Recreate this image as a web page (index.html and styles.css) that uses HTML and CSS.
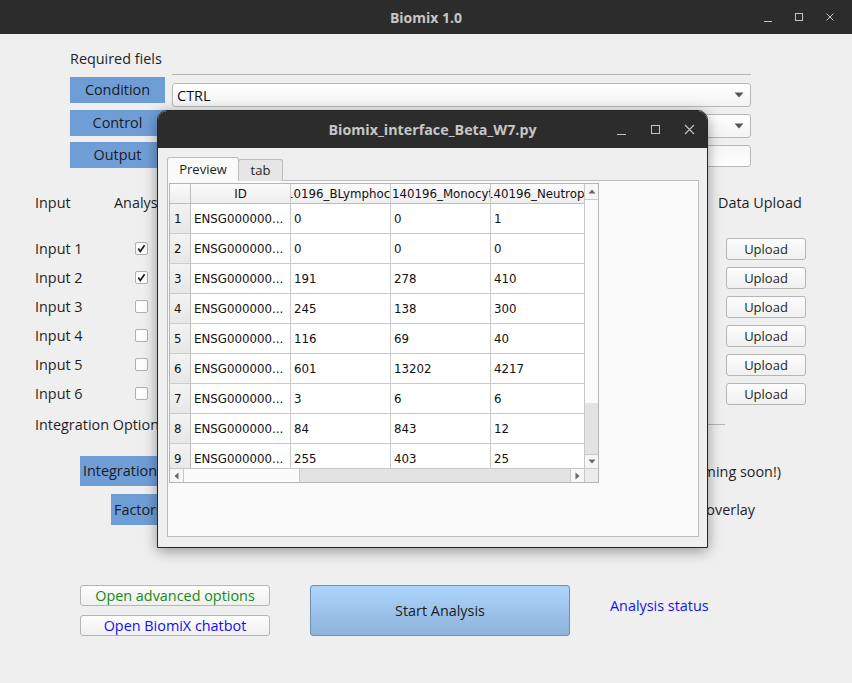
FILE: index.html
```html
<!DOCTYPE html>
<html lang="en">
<head>
<meta charset="utf-8">
<title>Biomix 1.0</title>
<link rel="stylesheet" href="styles.css">
</head>
<body>
<div class="app">
  <header class="titlebar">
    <span class="title">Biomix 1.0</span>
    <div class="wctl">
      <svg width="10" height="10" viewBox="0 0 10 10"><path d="M1 9.5H9" stroke="#c4c4c4" stroke-width="1"/></svg>
      <svg width="10" height="10" viewBox="0 0 10 10"><rect x="1.5" y="1.5" width="7" height="7" fill="none" stroke="#c4c4c4" stroke-width="1"/></svg>
      <svg width="10" height="10" viewBox="0 0 10 10"><path d="M1.5 1.5L8.5 8.5M8.5 1.5L1.5 8.5" stroke="#c4c4c4" stroke-width="1"/></svg>
    </div>
  </header>

  <main class="content">
    <section class="req">
      <div class="req-title">Required fiels</div>
      <div class="rule"></div>
      <div class="tag">Condition</div>
      <div class="combo c1"><span>CTRL</span><svg width="10" height="6" viewBox="0 0 10 6"><path d="M0.5 0.5H9.5L5 5.5Z" fill="#555"/></svg></div>
      <div class="tag">Control</div>
      <div class="combo c2"><span>Control</span><svg width="10" height="6" viewBox="0 0 10 6"><path d="M0.5 0.5H9.5L5 5.5Z" fill="#555"/></svg></div>
      <div class="tag">Output</div>
      <div class="lineedit"></div>
    </section>

    <section class="inputs">
      <div class="ih ih-input">Input</div>
      <div class="ih ih-analysis">Analysis</div>
      <div class="ih ih-upload">Data Upload</div>

      <div class="in-label">Input 1</div>
      <div class="chk"><svg width="11" height="11" viewBox="0 0 11 11"><path d="M2.3 5.6L4.3 8.4L8.6 2.2" fill="none" stroke="#1e1e1e" stroke-width="1.7"/></svg></div>
      <button class="upload">Upload</button>

      <div class="in-label">Input 2</div>
      <div class="chk"><svg width="11" height="11" viewBox="0 0 11 11"><path d="M2.3 5.6L4.3 8.4L8.6 2.2" fill="none" stroke="#1e1e1e" stroke-width="1.7"/></svg></div>
      <button class="upload">Upload</button>

      <div class="in-label">Input 3</div>
      <div class="chk"></div>
      <button class="upload">Upload</button>

      <div class="in-label">Input 4</div>
      <div class="chk"></div>
      <button class="upload">Upload</button>

      <div class="in-label">Input 5</div>
      <div class="chk"></div>
      <button class="upload">Upload</button>

      <div class="in-label">Input 6</div>
      <div class="chk"></div>
      <button class="upload">Upload</button>
    </section>

    <section class="integ-head">
      <span>Integration Options</span>
      <div class="integ-rule"></div>
    </section>

    <section class="opt-row integ-row">
      <div class="tag wide">Integration</div>
      <span class="opt-note">Multi-omics (Coming soon!)</span>
    </section>

    <section class="opt-row factors-row">
      <div class="tag wide">Factors</div>
      <span class="opt-note">Clinical overlay</span>
    </section>

    <section class="actions">
      <div class="side-btns">
        <button class="btn green">Open advanced options</button>
        <button class="btn blue">Open BiomiX chatbot</button>
      </div>
      <button class="start">Start Analysis</button>
      <span class="status">Analysis status</span>
    </section>
  </main>

  <div class="dialog">
    <header class="dtitle">
      <span class="title">Biomix_interface_Beta_W7.py</span>
      <div class="dctl">
        <svg width="11" height="11" viewBox="0 0 11 11"><path d="M1 10.5H10" stroke="#c4c4c4" stroke-width="1"/></svg>
        <svg width="11" height="11" viewBox="0 0 11 11"><rect x="1.5" y="1.5" width="8" height="8" fill="none" stroke="#c4c4c4" stroke-width="1"/></svg>
        <svg width="11" height="11" viewBox="0 0 11 11"><path d="M1 1L10 10M10 1L1 10" stroke="#c4c4c4" stroke-width="1.1"/></svg>
      </div>
    </header>
    <div class="dbody">
      <div class="tabs">
        <div class="tab active">Preview</div>
        <div class="tab">tab</div>
      </div>
      <div class="pane">
        <div class="table">
          <div class="viewport">
            <div class="grid">
              <div class="c hd rn"></div>
              <div class="c hd">ID</div>
              <div class="c hd hl"><span class="clip2">10196_BLymphocytes</span></div>
              <div class="c hd hl"><span class="clip3">140196_Monocytes</span></div>
              <div class="c hd hl"><span class="clip4">140196_Neutrophils</span></div>

              <div class="c rn">1</div><div class="c">ENSG000000...</div><div class="c">0</div><div class="c">0</div><div class="c">1</div>
              <div class="c rn">2</div><div class="c">ENSG000000...</div><div class="c">0</div><div class="c">0</div><div class="c">0</div>
              <div class="c rn">3</div><div class="c">ENSG000000...</div><div class="c">191</div><div class="c">278</div><div class="c">410</div>
              <div class="c rn">4</div><div class="c">ENSG000000...</div><div class="c">245</div><div class="c">138</div><div class="c">300</div>
              <div class="c rn">5</div><div class="c">ENSG000000...</div><div class="c">116</div><div class="c">69</div><div class="c">40</div>
              <div class="c rn">6</div><div class="c">ENSG000000...</div><div class="c">601</div><div class="c">13202</div><div class="c">4217</div>
              <div class="c rn">7</div><div class="c">ENSG000000...</div><div class="c">3</div><div class="c">6</div><div class="c">6</div>
              <div class="c rn">8</div><div class="c">ENSG000000...</div><div class="c">84</div><div class="c">843</div><div class="c">12</div>
              <div class="c rn">9</div><div class="c">ENSG000000...</div><div class="c">255</div><div class="c">403</div><div class="c">25</div>
            </div>
          </div>
          <div class="vscroll">
            <div class="sb-btn"><svg width="8" height="5" viewBox="0 0 8 5"><path d="M0.5 4.5H7.5L4 0.5Z" fill="#666"/></svg></div>
            <div class="sb-handle-v"></div>
            <div class="sb-track"></div>
            <div class="sb-btn bottom"><svg width="8" height="5" viewBox="0 0 8 5"><path d="M0.5 0.5H7.5L4 4.5Z" fill="#666"/></svg></div>
          </div>
          <div class="hscroll">
            <div class="sb-btn h"><svg width="5" height="8" viewBox="0 0 5 8"><path d="M4.5 0.5V7.5L0.5 4Z" fill="#666"/></svg></div>
            <div class="sb-handle-h"></div>
            <div class="sb-track"></div>
            <div class="sb-btn h right"><svg width="5" height="8" viewBox="0 0 5 8"><path d="M0.5 0.5V7.5L4.5 4Z" fill="#666"/></svg></div>
          </div>
          <div class="corner"></div>
        </div>
      </div>
    </div>
  </div>
</div>
</body>
</html>
```

FILE: styles.css
```css
html, body {
  margin: 0;
  padding: 0;
  height: 100%;
}
body {
  background: #efefef;
  font-family: "Open Sans", "Noto Sans", sans-serif;
  font-size: 14.4px;
  color: #1f1f1f;
  overflow: hidden;
}
button {
  font-family: inherit;
  padding: 0;
  margin: 0;
  cursor: default;
}
.app {
  position: relative;
  width: 852px;
  height: 683px;
  background: #efefef;
}

/* ---------- main title bar ---------- */
.titlebar {
  height: 34px;
  background: #2c2c2c;
  display: grid;
  grid-template-columns: 1fr auto 1fr;
  align-items: center;
}
.title {
  grid-column: 2;
  color: #c6c6c6;
  font-weight: 700;
  font-size: 14px;
  white-space: nowrap;
}
.wctl {
  grid-column: 3;
  justify-self: end;
  display: flex;
  gap: 21px;
  padding-right: 17px;
}
.wctl svg, .dctl svg { display: block; }

/* ---------- content ---------- */
.content { padding-top: 15px; }

.req {
  display: grid;
  grid-template-columns: 95px 579px;
  grid-template-rows: 28px 33px 32px 26px;
  column-gap: 7px;
  padding-left: 70px;
}
.req-title {
  line-height: 20px;
  white-space: nowrap;
}
.rule {
  align-self: start;
  margin-top: 25px;
  height: 1px;
  background: #b5b5b5;
}
.tag {
  align-self: start;
  height: 26px;
  line-height: 26px;
  text-align: center;
  background: #6f9ed6;
  color: #1c1c1c;
  white-space: nowrap;
}
.combo {
  align-self: start;
  box-sizing: border-box;
  height: 24px;
  border: 1px solid #b8b8b8;
  border-radius: 3px;
  background: linear-gradient(#ffffff, #f3f3f3);
  display: flex;
  align-items: center;
  justify-content: space-between;
  padding: 0 6px 0 4px;
  font-size: 14.5px;
  color: #111;
}
.combo svg { display: block; }
.c1 { margin-top: 6px; }
.c2 { margin-top: 4px; }
.lineedit {
  align-self: start;
  margin-top: 3px;
  box-sizing: border-box;
  height: 22px;
  border: 1px solid #b8b8b8;
  border-radius: 3px;
  background: linear-gradient(#f6f6f6, #ffffff);
}

/* ---------- inputs ---------- */
.inputs {
  margin-top: 25px;
  display: grid;
  grid-template-columns: 100px 13px 1fr 80px;
  grid-template-rows: 41px repeat(6, 29px);
  padding: 0 46px 0 35px;
}
.ih {
  grid-row: 1;
  align-self: start;
  line-height: 20px;
  white-space: nowrap;
}
.ih-input { grid-column: 1; }
.ih-analysis { grid-column: 1 / 4; margin-left: 79px; }
.ih-upload { grid-column: 4; margin-left: -8px; }
.in-label {
  grid-column: 1;
  align-self: center;
  line-height: 20px;
  white-space: nowrap;
}
.chk {
  grid-column: 2;
  align-self: center;
  box-sizing: border-box;
  width: 13px;
  height: 13px;
  border: 1px solid #b0b0b0;
  border-radius: 2px;
  background: #fdfdfd;
}
.chk svg { display: block; }
.upload {
  grid-column: 4;
  align-self: center;
  box-sizing: border-box;
  height: 22px;
  border: 1px solid #b5b5b5;
  border-radius: 3px;
  background: linear-gradient(#fdfdfd, #f0f0f0);
  font-size: 13px;
  color: #1f1f1f;
}

/* ---------- integration ---------- */
.integ-head {
  margin-top: 6px;
  height: 20px;
  display: flex;
  align-items: center;
  padding: 0 127px 0 35px;
  white-space: nowrap;
}
.integ-rule {
  flex: 1;
  height: 1px;
  background: #b5b5b5;
  margin-left: 10px;
}
.opt-row {
  display: flex;
  align-items: center;
  justify-content: space-between;
}
.integ-row {
  margin-top: 22px;
  height: 30px;
  padding: 0 71px 0 80px;
}
.integ-row .tag { height: 30px; line-height: 30px; }
.factors-row {
  margin-top: 8px;
  height: 31px;
  padding: 0 97px 0 111px;
}
.factors-row .tag { height: 31px; line-height: 31px; }
.tag.wide {
  width: 170px;
  text-align: left;
  padding-left: 3px;
  box-sizing: border-box;
}
.opt-note { white-space: nowrap; }

/* ---------- actions ---------- */
.actions {
  margin-top: 60px;
  display: flex;
  align-items: flex-start;
  padding-left: 80px;
}
.side-btns {
  display: flex;
  flex-direction: column;
  gap: 9px;
}
.btn {
  box-sizing: border-box;
  width: 190px;
  height: 21px;
  border: 1px solid #b5b5b5;
  border-radius: 3px;
  background: linear-gradient(#fdfdfd, #f0f0f0);
  font-size: 14.4px;
  line-height: 19px;
}
.btn.green { color: #158a15; }
.btn.blue { color: #1010f0; }
.start {
  margin-left: 40px;
  box-sizing: border-box;
  width: 260px;
  height: 51px;
  border: 1px solid #6f8fb3;
  border-radius: 3px;
  background: linear-gradient(#acd4fb, #8fb3db);
  font-size: 14.4px;
  color: #1c1c1c;
}
.status {
  margin-left: 40px;
  margin-top: 11px;
  line-height: 20px;
  color: #1414ee;
  white-space: nowrap;
}

/* ---------- dialog ---------- */
.dialog {
  position: absolute;
  left: 157px;
  top: 110px;
  width: 551px;
  height: 438px;
  box-sizing: border-box;
  border: 1px solid #262626;
  border-radius: 10px 10px 0 0;
  background: #efefef;
  box-shadow: 0 3px 14px rgba(0, 0, 0, 0.38);
  display: flex;
  flex-direction: column;
  overflow: hidden;
}
.dtitle {
  height: 37px;
  flex: none;
  background: #2c2c2c;
  display: grid;
  grid-template-columns: 1fr auto 1fr;
  align-items: center;
}
.dtitle .title { font-size: 14.3px; }
.dctl {
  grid-column: 3;
  justify-self: end;
  display: flex;
  gap: 23px;
  padding-right: 12px;
}
.dbody {
  flex: 1;
  display: flex;
  flex-direction: column;
  padding: 9px 8px 10px 9px;
}
.tabs {
  position: relative;
  z-index: 1;
  display: flex;
  align-items: flex-end;
  height: 24px;
}
.tab {
  box-sizing: border-box;
  height: 22px;
  width: 45px;
  margin-left: -1px;
  border: 1px solid #bdbdbd;
  border-bottom: none;
  border-radius: 3px 3px 0 0;
  background: #e6e6e6;
  font-size: 13px;
  text-align: center;
  line-height: 21px;
  color: #1f1f1f;
}
.tab.active {
  margin-left: 0;
  width: 72px;
  height: 24px;
  background: #fafafa;
  line-height: 23px;
}
.pane {
  flex: 1;
  margin-top: -1px;
  border: 1px solid #bdbdbd;
  background: #fafafa;
  padding: 2px 0 0 1px;
}

/* ---------- table ---------- */
.table {
  box-sizing: border-box;
  width: 430px;
  height: 300px;
  border: 1px solid #b5b5b5;
  background: #fff;
  display: grid;
  grid-template-columns: 414px 14px;
  grid-template-rows: 284px 14px;
  font-family: "DejaVu Sans", sans-serif;
  font-size: 11.8px;
  color: #111;
}
.viewport { overflow: hidden; }
.grid {
  display: grid;
  grid-template-columns: 21px 100px 100px 100px 100px;
  grid-template-rows: 20px;
  grid-auto-rows: 30px;
  width: 421px;
}
.c {
  box-sizing: border-box;
  border-right: 1px solid #cbcbcb;
  border-bottom: 1px solid #cbcbcb;
  display: flex;
  align-items: center;
  padding-left: 3px;
  white-space: nowrap;
  overflow: hidden;
}
.c.rn {
  padding-left: 4px;
  background: linear-gradient(#f3f3f3, #e7e7e7);
  border-right-color: #bdbdbd;
}
.c.hd {
  justify-content: center;
  padding-left: 0;
  background: linear-gradient(#fbfbfb, #eeeeee);
  border-bottom-color: #bdbdbd;
}
.c.hd.hl { justify-content: flex-start; }
.clip2 { margin-left: -5px; }
.clip3 { margin-left: 1px; }
.clip4 { margin-left: -5px; }

.vscroll {
  display: flex;
  flex-direction: column;
  border-left: 1px solid #c8c8c8;
  background: #fafafa;
}
.hscroll {
  display: flex;
  border-top: 1px solid #c8c8c8;
  background: #fafafa;
}
.sb-btn {
  flex: none;
  height: 15px;
  display: flex;
  align-items: center;
  justify-content: center;
  border-bottom: 1px solid #c8c8c8;
  background: #f6f6f6;
}
.sb-btn.bottom {
  height: 13px;
  border-bottom: none;
  border-top: 1px solid #c8c8c8;
}
.sb-btn.h {
  height: auto;
  width: 13px;
  border-bottom: none;
  border-right: 1px solid #c8c8c8;
}
.sb-btn.h.right {
  border-right: none;
  border-left: 1px solid #c8c8c8;
}
.sb-btn svg { display: block; }
.sb-handle-v {
  flex: none;
  height: 203px;
  background: #fbfbfb;
}
.sb-handle-h {
  flex: none;
  width: 115px;
  background: #fbfbfb;
  border-right: 1px solid #c8c8c8;
}
.sb-track {
  flex: 1;
  background: #e3e3e3;
}
.corner {
  background: #ececec;
  border-top: 1px solid #c8c8c8;
  border-left: 1px solid #c8c8c8;
}
```
